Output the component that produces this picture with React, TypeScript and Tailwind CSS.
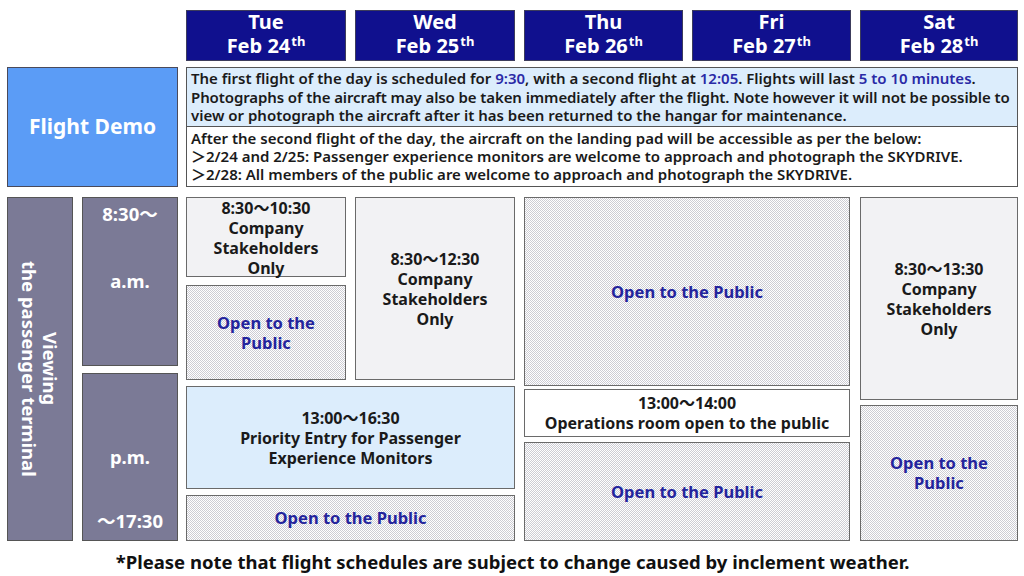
import React from "react";

const font = "font-['Noto_Sans','Noto_Sans_CJK_JP',sans-serif]";

// checkered dot fill used for the "Open to the Public" cells
const dotted =
  "bg-white bg-[conic-gradient(#cdcdd4_25%,#ffffff_0_50%,#cdcdd4_0_75%,#ffffff_0)] bg-[length:2px_2px]";

const days = [
  { day: "Tue", date: "Feb 24", w: "w-[160px]" },
  { day: "Wed", date: "Feb 25", w: "w-[160px]" },
  { day: "Thu", date: "Feb 26", w: "w-[159px]" },
  { day: "Fri", date: "Feb 27", w: "w-[159px]" },
  { day: "Sat", date: "Feb 28", w: "w-[158px]" },
];

function OpenCell({ className }: { className: string }) {
  return (
    <div
      className={`${dotted} ${className} border border-[#6a6a6a] flex items-center justify-center text-center text-[16.5px] leading-[20px] font-bold text-[#24249c]`}
    >
      Open to the Public
    </div>
  );
}

function InfoCell({
  className,
  lines,
}: {
  className: string;
  lines: string[];
}) {
  return (
    <div
      className={`${className} border border-[#6a6a6a] flex flex-col items-center justify-center text-center text-[16px] leading-[20px] font-bold text-[#1a1a1a]`}
    >
      {lines.map((l, i) => (
        <span key={i}>{l}</span>
      ))}
    </div>
  );
}

export default function App() {
  return (
    <div className={`w-[1024px] h-[576px] bg-white pl-[7px] pt-[10px] ${font}`}>
      {/* Day headers */}
      <div className="flex ml-[179px] gap-[9px]">
        {days.map((d) => (
          <div
            key={d.day}
            className={`${d.w} h-[51px] bg-[#10108e] border border-[#3c3c5c] flex flex-col items-center justify-center text-white font-bold text-[20px] leading-[24px] pb-[1px]`}
          >
            <span>{d.day}</span>
            <span>
              {d.date}
              <span className="text-[13px] relative -top-[7px] ml-[1px]">th</span>
            </span>
          </div>
        ))}
      </div>

      {/* Flight demo */}
      <div className="flex gap-[8px] mt-[6px]">
        <div className="w-[171px] h-[120px] bg-[#5b9cf6] border border-[#4a4a5a] flex items-center justify-center text-white font-bold text-[21px]">
          Flight Demo
        </div>
        <div className="w-[832px] h-[120px] border border-[#555] flex flex-col text-[15px] leading-[18.5px] font-semibold text-[#1a1a1a] whitespace-nowrap">
          <div className="h-[59px] bg-[#dcedfc] border-b border-[#555] px-[4px] pt-[1px]">
            <div>
              The first flight of the day is scheduled for{" "}
              <span className="text-[#2a2aa6]">9:30</span>, with a second flight at{" "}
              <span className="text-[#2a2aa6]">12:05</span>. Flights will last{" "}
              <span className="text-[#2a2aa6]">5 to 10 minutes</span>.
            </div>
            <div className="tracking-[-0.1px]">
              Photographs of the aircraft may also be taken immediately after the
              flight. Note however it will not be possible to
            </div>
            <div>
              view or photograph the aircraft after it has been returned to the
              hangar for maintenance.
            </div>
          </div>
          <div className="flex-1 bg-white px-[4px] pt-[2px] leading-[18px]">
            <div>
              After the second flight of the day, the aircraft on the landing pad
              will be accessible as per the below:
            </div>
            <div>
              ＞2/24 and 2/25: Passenger experience monitors are welcome to
              approach and photograph the SKYDRIVE.
            </div>
            <div>
              ＞2/28: All members of the public are welcome to approach and
              photograph the SKYDRIVE.
            </div>
          </div>
        </div>
      </div>

      {/* Schedule */}
      <div className="flex mt-[10px] h-[344px]">
        <div className="w-[66px] h-full bg-[#7b7a96] border border-[#555] flex items-center justify-center">
          <div className="[writing-mode:vertical-rl] text-white font-bold text-[18.5px] leading-[21px] text-center">
            Viewing
            <br />
            the passenger terminal
          </div>
        </div>

        <div className="w-[96px] ml-[9px] flex flex-col gap-[7px] text-white font-bold text-[18.5px]">
          <div className="h-[169px] bg-[#7b7a96] border border-[#555] flex flex-col items-center pt-[2px]">
            <span>8:30～</span>
            <span className="mt-[39px]">a.m.</span>
          </div>
          <div className="flex-1 bg-[#7b7a96] border border-[#555] flex flex-col items-center justify-end pb-[5px]">
            <span>p.m.</span>
            <span className="mt-[37px]">～17:30</span>
          </div>
        </div>

        {/* Tue + Wed */}
        <div className="w-[329px] ml-[8px] flex flex-col">
          <div className="flex gap-[9px] h-[183px]">
            <div className="w-[160px] flex flex-col gap-[8px]">
              <InfoCell
                className="h-[80px] bg-[#f2f2f4] justify-start leading-[19.5px]"
                lines={["8:30～10:30", "Company", "Stakeholders", "Only"]}
              />
              <OpenCell className="flex-1 w-full px-6" />
            </div>
            <InfoCell
              className="w-[160px] h-[183px] bg-[#f2f2f4]"
              lines={["8:30～12:30", "Company", "Stakeholders", "Only"]}
            />
          </div>
          <InfoCell
            className="h-[103px] mt-[6px] bg-[#dcedfc]"
            lines={["13:00～16:30", "Priority Entry for Passenger", "Experience Monitors"]}
          />
          <OpenCell className="flex-1 mt-[6px]" />
        </div>

        {/* Thu + Fri */}
        <div className="w-[326px] ml-[9px] flex flex-col">
          <OpenCell className="h-[189px]" />
          <InfoCell
            className="h-[48px] mt-[3px] bg-white"
            lines={["13:00～14:00", "Operations room open to the public"]}
          />
          <OpenCell className="flex-1 mt-[5px]" />
        </div>

        {/* Sat */}
        <div className="w-[158px] ml-[10px] flex flex-col">
          <InfoCell
            className="h-[203px] bg-[#f2f2f4]"
            lines={["8:30～13:30", "Company", "Stakeholders", "Only"]}
          />
          <OpenCell className="flex-1 mt-[5px] px-4" />
        </div>
      </div>

      <div className="w-[1011px] text-center mt-[7px] text-[18.5px] font-bold text-[#111]">
        *Please note that flight schedules are subject to change caused by
        inclement weather.
      </div>
    </div>
  );
}
